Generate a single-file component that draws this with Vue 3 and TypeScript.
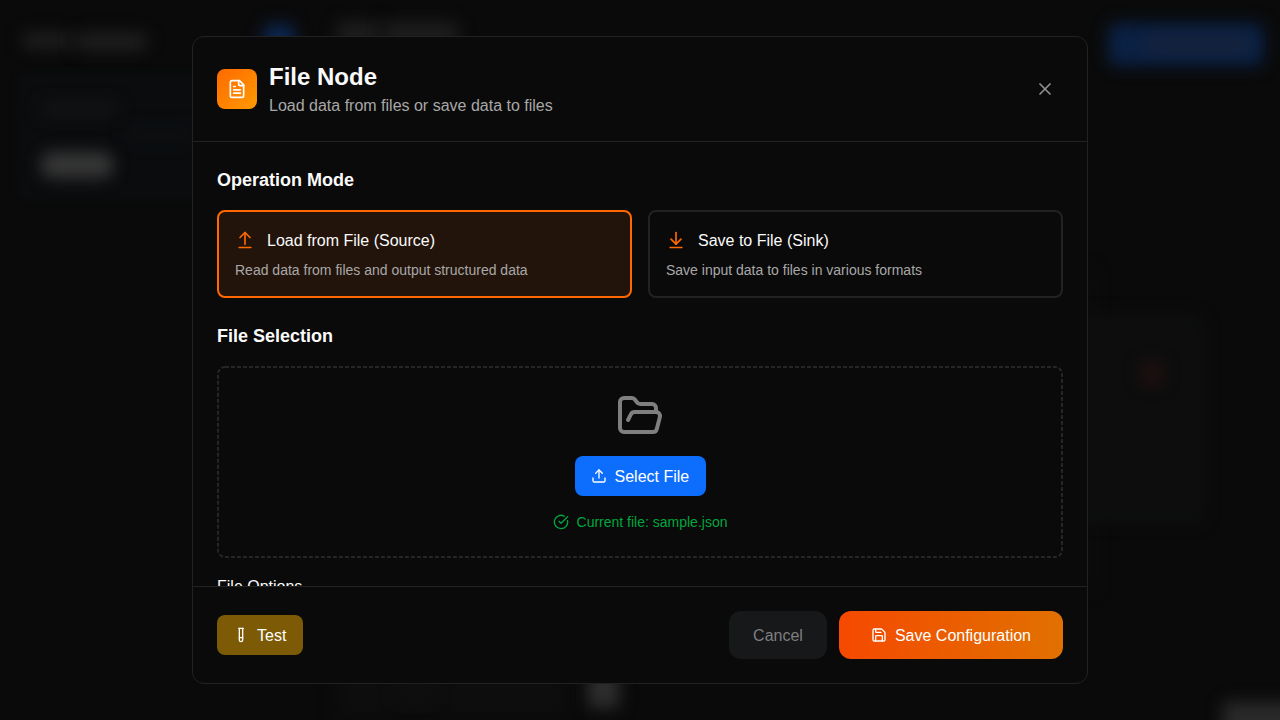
<script setup lang="ts">
import { ref } from 'vue'

type Mode = 'source' | 'sink'

interface ModeOption {
  id: Mode
  title: string
  description: string
  paths: string[]
}

const mode = ref<Mode>('source')
const fileName = ref('sample.json')

const modes: ModeOption[] = [
  {
    id: 'source',
    title: 'Load from File (Source)',
    description: 'Read data from files and output structured data',
    paths: ['m18 9-6-6-6 6', 'M12 3v14', 'M5 21h14'],
  },
  {
    id: 'sink',
    title: 'Save to File (Sink)',
    description: 'Save input data to files in various formats',
    paths: ['M12 17V3', 'm6 11 6 6 6-6', 'M19 21H5'],
  },
]
</script>

<template>
  <div class="screen">
    <div class="backdrop" aria-hidden="true">
      <i class="blob side-card"></i>
      <i class="blob side-title-a"></i>
      <i class="blob side-title-b"></i>
      <i class="blob side-name"></i>
      <i class="blob side-desc"></i>
      <i class="blob side-tag"></i>
      <i class="blob add"></i>
      <i class="blob main-title-a"></i>
      <i class="blob main-title-b"></i>
      <i class="blob primary"></i>
      <i class="blob primary-label"></i>
      <i class="blob canvas-edge"></i>
      <i class="blob node"></i>
      <i class="blob remove"></i>
      <i class="blob lower-card"></i>
      <i class="blob lower-label"></i>
      <i class="blob handle"></i>
      <i class="blob corner"></i>
    </div>

    <section class="dialog" role="dialog" aria-label="File Node">
      <header class="header">
        <div class="identity">
          <div class="badge">
            <svg class="icon i20" viewBox="0 0 24 24">
              <path d="M15 2H6a2 2 0 0 0-2 2v16a2 2 0 0 0 2 2h12a2 2 0 0 0 2-2V7Z" />
              <path d="M14 2v4a2 2 0 0 0 2 2h4" />
              <path d="M10 9H8" />
              <path d="M16 13H8" />
              <path d="M16 17H8" />
            </svg>
          </div>
          <div>
            <h2>File Node</h2>
            <p class="subtitle label">Load data from files or save data to files</p>
          </div>
        </div>
        <button class="close" aria-label="Close">
          <svg class="icon i20" viewBox="0 0 24 24">
            <path d="M18 6 6 18" />
            <path d="m6 6 12 12" />
          </svg>
        </button>
      </header>

      <div class="body">
        <h3>Operation Mode</h3>
        <div class="modes">
          <button
            v-for="m in modes"
            :key="m.id"
            class="mode"
            :class="{ active: mode === m.id }"
            @click="mode = m.id"
          >
            <span class="mode-head">
              <svg class="icon i20 orange" viewBox="0 0 24 24">
                <path v-for="d in m.paths" :key="d" :d="d" />
              </svg>
              <span class="label">{{ m.title }}</span>
            </span>
            <span class="mode-desc">{{ m.description }}</span>
          </button>
        </div>

        <h3 class="second">File Selection</h3>
        <div class="drop">
          <svg class="outline" viewBox="0 0 846 192" aria-hidden="true">
            <rect x="1" y="1" width="844" height="190" rx="7" />
          </svg>
          <svg class="icon folder" viewBox="0 0 24 24">
            <path d="m6 14 1.5-2.9A2 2 0 0 1 9.24 10H20a2 2 0 0 1 1.94 2.5l-1.54 6a2 2 0 0 1-1.95 1.5H4a2 2 0 0 1-2-2V5a2 2 0 0 1 2-2h3.9a2 2 0 0 1 1.69.9l.81 1.2a2 2 0 0 0 1.67.9H18a2 2 0 0 1 2 2v2" />
          </svg>
          <button class="btn select">
            <svg class="icon i16" viewBox="0 0 24 24">
              <path d="M21 15v4a2 2 0 0 1-2 2H5a2 2 0 0 1-2-2v-4" />
              <path d="m17 8-5-5-5 5" />
              <path d="M12 3v12" />
            </svg>
            <span class="label">Select File</span>
          </button>
          <div class="current">
            <svg class="icon i16" viewBox="0 0 24 24">
              <path d="M21.801 10A10 10 0 1 1 17 3.335" />
              <path d="m9 11 3 3L22 4" />
            </svg>
            <span>Current file: {{ fileName }}</span>
          </div>
        </div>
        <h4 class="label">File Options</h4>
      </div>

      <footer class="footer">
        <button class="btn test">
          <svg class="icon i16" viewBox="0 0 24 24">
            <path d="M14.5 2v17.5c0 1.4-1.1 2.5-2.5 2.5s-2.5-1.1-2.5-2.5V2" />
            <path d="M8.5 2h7" />
            <path d="M14.5 16h-5" />
          </svg>
          <span class="label">Test</span>
        </button>
        <div class="actions">
          <button class="btn cancel"><span class="label">Cancel</span></button>
          <button class="btn save">
            <svg class="icon i16" viewBox="0 0 24 24">
              <path d="M15.2 3a2 2 0 0 1 1.4.6l3.8 3.8a2 2 0 0 1 .6 1.4V19a2 2 0 0 1-2 2H5a2 2 0 0 1-2-2V5a2 2 0 0 1 2-2z" />
              <path d="M17 21v-7a1 1 0 0 0-1-1H8a1 1 0 0 0-1 1v7" />
              <path d="M7 3v4a1 1 0 0 0 1 1h7" />
            </svg>
            <span class="label">Save Configuration</span>
          </button>
        </div>
      </footer>
    </section>
  </div>
</template>

<style>
body {
  margin: 0;
  background: #0a0a0a;
}
</style>

<style scoped>
.screen {
  position: relative;
  height: 720px;
  overflow: hidden;
  display: flex;
  align-items: center;
  justify-content: center;
  background: #0a0a0a;
  color: #fafafa;
  font: 16px/24px Helvetica, "Liberation Sans", Arial, sans-serif;
}
.screen * {
  box-sizing: border-box;
}
.backdrop {
  position: absolute;
  inset: 0;
}
.blob {
  position: absolute;
  filter: blur(8px);
}
.side-card { left: 16px; top: 72px; width: 260px; height: 129px; background: #0a0c0e; border-radius: 12px; filter: blur(3px); }
.side-title-a { left: 23px; top: 33px; width: 48px; height: 15px; background: #202020; }
.side-title-b { left: 76px; top: 33px; width: 70px; height: 17px; background: #202020; }
.side-name { left: 41px; top: 102px; width: 76px; height: 14px; background: #131416; }
.side-desc { left: 125px; top: 129px; width: 70px; height: 12px; background: #0e1012; }
.side-tag { left: 41px; top: 152px; width: 72px; height: 26px; background: #373737; border-radius: 10px; }
.add { left: 263px; top: 24px; width: 32px; height: 34px; background: #0c2650; border-radius: 8px; }
.main-title-a { left: 337px; top: 22px; width: 44px; height: 22px; background: #1e1e1e; }
.main-title-b { left: 384px; top: 22px; width: 74px; height: 22px; background: #1e1e1e; }
.primary { left: 1108px; top: 23px; width: 156px; height: 43px; background: #0b2144; border-radius: 8px; }
.primary-label { left: 1146px; top: 37px; width: 104px; height: 15px; background: #17233a; }
.canvas-edge { left: 1060px; top: 270px; width: 34px; height: 320px; background: #0c0c0c; }
.node { left: 1020px; top: 315px; width: 184px; height: 208px; background: #0d0d0d; border: 10px solid #0c0e0d; border-radius: 12px; }
.remove { left: 1141px; top: 362px; width: 22px; height: 22px; background: #211111; }
.lower-card { left: 336px; top: 600px; width: 230px; height: 118px; background: #0d0d0d; }
.lower-label { left: 396px; top: 686px; width: 38px; height: 14px; background: #101010; }
.handle { left: 588px; top: 670px; width: 31px; height: 38px; background: #2e2e2e; }
.corner { left: 1223px; top: 702px; width: 90px; height: 50px; background: #2a2a2a; }

.dialog {
  position: relative;
  display: flex;
  flex-direction: column;
  width: 896px;
  height: 648px;
  background: #0a0a0a;
  border: 1px solid #222;
  border-radius: 12px;
  overflow: hidden;
}
.header,
.footer {
  flex: none;
  display: flex;
  align-items: center;
  justify-content: space-between;
  padding: 24px;
}
.header {
  border-bottom: 1px solid #222;
}
.footer {
  border-top: 1px solid #222;
}
.identity {
  display: flex;
  align-items: center;
  gap: 12px;
}
.badge {
  display: flex;
  padding: 10px;
  border-radius: 8px;
  color: #fff;
  background: linear-gradient(135deg, #ff6900, #fe9a00);
}
.icon {
  display: block;
  flex: none;
  fill: none;
  stroke: currentColor;
  stroke-width: 2;
  stroke-linecap: round;
  stroke-linejoin: round;
}
.i20 { width: 20px; height: 20px; }
.i16 { width: 16px; height: 16px; }
.orange { color: #ff6900; }
h2, h3, h4, p { margin: 0; }
h2 { font-size: 24px; line-height: 32px; font-weight: 700; }
h3 { font-size: 18px; line-height: 28px; font-weight: 600; }
h3.second { margin-top: 24px; }
h4 { margin-top: 16px; font-size: 16px; font-weight: 400; }
.label { display: block; transform: translateY(1px); }
.subtitle { color: #a8a8a8; }
button {
  font: inherit;
  border: 0;
  margin: 0;
  cursor: pointer;
}
.close {
  padding: 8px;
  background: none;
  color: #929292;
}
.body {
  flex: 1;
  min-height: 0;
  padding: 24px;
  overflow: hidden;
}
.modes {
  display: grid;
  grid-template-columns: 1fr 1fr;
  gap: 16px;
  margin-top: 16px;
}
.mode {
  display: flex;
  flex-direction: column;
  gap: 8px;
  padding: 16px;
  text-align: left;
  color: #fafafa;
  background: transparent;
  border: 2px solid #222;
  border-radius: 8px;
}
.mode.active {
  border-color: #ff6900;
  background: #23140b;
}
.mode-head {
  display: flex;
  align-items: center;
  gap: 12px;
}
.mode-desc {
  font-size: 14px;
  line-height: 20px;
  color: #a8a8a8;
}
.drop {
  position: relative;
  display: flex;
  flex-direction: column;
  align-items: center;
  gap: 16px;
  margin-top: 16px;
  padding: 26px;
}
.outline {
  position: absolute;
  inset: 0;
  width: 100%;
  height: 100%;
  fill: none;
  stroke: #262626;
  stroke-width: 2;
  stroke-dasharray: 4 2;
  pointer-events: none;
}
.folder {
  width: 48px;
  height: 48px;
  color: #7f7f7f;
}
.btn {
  display: flex;
  align-items: center;
  gap: 8px;
  padding: 8px 16px;
  border-radius: 8px;
  color: #fff;
}
.select { width: 131px; background: #0d6efd; }
.current {
  display: flex;
  align-items: center;
  gap: 8px;
  font-size: 14px;
  line-height: 20px;
  color: #00a63e;
}
.test { width: 85.5px; background: #7d5b06; }
.actions {
  display: flex;
  gap: 12px;
}
.cancel {
  padding: 12px 24px;
  border-radius: 12px;
  color: #7f7f7f;
  background: #16181a;
}
.save {
  padding: 12px 32px;
  border-radius: 12px;
  background: linear-gradient(90deg, #f54900, #e17100);
}
</style>
